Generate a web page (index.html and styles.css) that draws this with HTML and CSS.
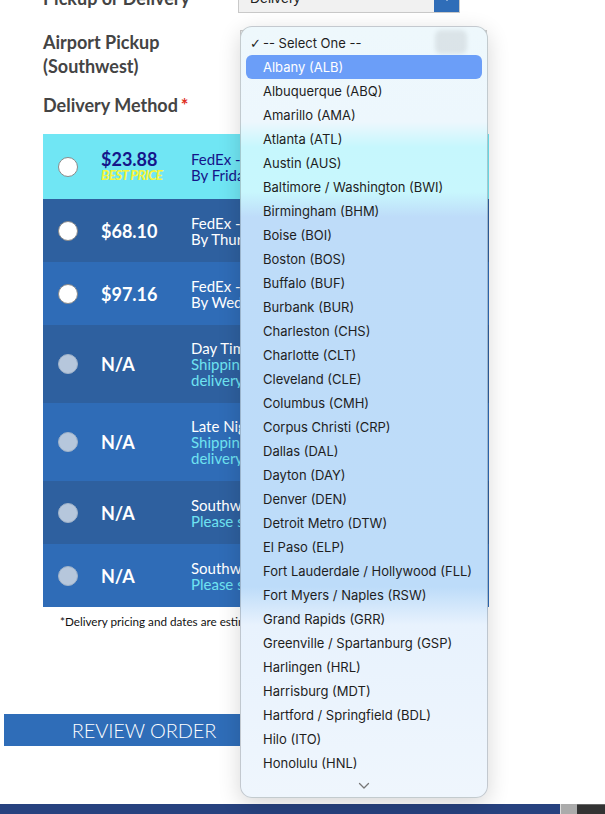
FILE: index.html
```html
<!DOCTYPE html>
<html>
<head>
<meta charset="utf-8">
<link rel="stylesheet" href="styles.css">
</head>
<body>
<div class="form">
  <div class="field field-first">
    <div class="label">Pickup or Delivery<span class="req">*</span></div>
    <div class="select">
      <span class="select-text">Delivery</span>
      <span class="select-btn"><svg width="12" height="10" viewBox="0 0 12 10"><path d="M1 2 L6 8 L11 2 Z" fill="#fff"/></svg></span>
    </div>
  </div>
  <div class="field field-airport">
    <div class="label">Airport Pickup<br>(Southwest)</div>
    <div class="select select-airport"></div>
  </div>
  <div class="field field-method">
    <div class="label">Delivery Method<span class="req">*</span></div>
  </div>

  <div class="table">
    <div class="trow best">
      <span class="radio"></span>
      <div class="price"><div class="amt">$23.88</div><div class="bp">BEST PRICE</div></div>
      <div class="carrier">FedEx - 2Day<br>By Friday, 5:00 PM</div>
    </div>
    <div class="trow dark">
      <span class="radio"></span>
      <div class="price"><div class="amt">$68.10</div></div>
      <div class="carrier">FedEx - Priority Overnight<br>By Thursday, 10:30 AM</div>
    </div>
    <div class="trow light">
      <span class="radio"></span>
      <div class="price"><div class="amt">$97.16</div></div>
      <div class="carrier">FedEx - First Overnight<br>By Wednesday, 8:00 AM</div>
    </div>
    <div class="trow dark tall">
      <span class="radio off"></span>
      <div class="price"><div class="amt">N/A</div></div>
      <div class="carrier">Day Time Delivery<br><span class="note">Shipping address required for<br>delivery estimate</span></div>
    </div>
    <div class="trow light tall">
      <span class="radio off"></span>
      <div class="price"><div class="amt">N/A</div></div>
      <div class="carrier">Late Night Delivery<br><span class="note">Shipping address required for<br>delivery estimate</span></div>
    </div>
    <div class="trow dark">
      <span class="radio off"></span>
      <div class="price"><div class="amt">N/A</div></div>
      <div class="carrier">Southwest Next Flight Guaranteed<br><span class="note">Please select an airport</span></div>
    </div>
    <div class="trow light">
      <span class="radio off"></span>
      <div class="price"><div class="amt">N/A</div></div>
      <div class="carrier">Southwest Rush Priority<br><span class="note">Please select an airport</span></div>
    </div>
  </div>
  <p class="footnote">*Delivery pricing and dates are estimates and may change at checkout.</p>
</div>

<div class="actions">
  <button class="review">REVIEW ORDER</button>
</div>

<div class="footer">
  <div class="f-main"></div>
  <div class="f-grey"></div>
  <div class="f-dark"></div>
</div>

<div class="dropdown">
  <div class="ghost"></div>
  <ul class="options">
    <li class="checked"><span class="check">✓</span>-- Select One --</li>
    <li class="hl">Albany (ALB)</li>
    <li>Albuquerque (ABQ)</li>
    <li>Amarillo (AMA)</li>
    <li>Atlanta (ATL)</li>
    <li>Austin (AUS)</li>
    <li>Baltimore / Washington (BWI)</li>
    <li>Birmingham (BHM)</li>
    <li>Boise (BOI)</li>
    <li>Boston (BOS)</li>
    <li>Buffalo (BUF)</li>
    <li>Burbank (BUR)</li>
    <li>Charleston (CHS)</li>
    <li>Charlotte (CLT)</li>
    <li>Cleveland (CLE)</li>
    <li>Columbus (CMH)</li>
    <li>Corpus Christi (CRP)</li>
    <li>Dallas (DAL)</li>
    <li>Dayton (DAY)</li>
    <li>Denver (DEN)</li>
    <li>Detroit Metro (DTW)</li>
    <li>El Paso (ELP)</li>
    <li>Fort Lauderdale / Hollywood (FLL)</li>
    <li>Fort Myers / Naples (RSW)</li>
    <li>Grand Rapids (GRR)</li>
    <li>Greenville / Spartanburg (GSP)</li>
    <li>Harlingen (HRL)</li>
    <li>Harrisburg (MDT)</li>
    <li>Hartford / Springfield (BDL)</li>
    <li>Hilo (ITO)</li>
    <li>Honolulu (HNL)</li>
  </ul>
  <div class="more"><svg width="12" height="8" viewBox="0 0 12 8"><path d="M1.5 1.5 L6 6 L10.5 1.5" fill="none" stroke="#777" stroke-width="1.3" stroke-linecap="round" stroke-linejoin="round"/></svg></div>
</div>
</body>
</html>
```

FILE: styles.css
```css
* { box-sizing: border-box; }
html, body { margin: 0; padding: 0; }
body {
  width: 605px;
  height: 814px;
  overflow: hidden;
  background: #fff;
  font-family: Lato, "Open Sans", sans-serif;
  position: relative;
}

.form {
  margin-top: -17px;
  padding-left: 43px;
}

.field {
  display: flex;
  align-items: flex-start;
}
.field-first { height: 30px; }
.field-airport { margin-top: 17px; }
.field-method { margin-top: 15px; }

.label {
  width: 195px;
  font-size: 18px;
  line-height: 24px;
  font-weight: 700;
  color: #444;
}
.field-first .label { margin-top: 3px; }
.req { color: #e0301e; margin-left: 3px; }

.select {
  width: 222px;
  height: 30px;
  background: #f1f1f1;
  border: 1px solid #c9c9c9;
  display: flex;
  align-items: center;
  justify-content: space-between;
  font-family: "Liberation Sans", Arial, sans-serif;
  font-size: 14px;
  color: #222;
}
.select-text { padding-left: 11px; }
.select-btn {
  width: 25px;
  height: 28px;
  background: #2f6db8;
  display: flex;
  align-items: center;
  justify-content: center;
}
.select-airport { width: 247px; margin-left: 2px; }

.table {
  margin-top: 17px;
  width: 446px;
}
.trow {
  display: flex;
  align-items: center;
  min-height: 63px;
  color: #fff;
}
.trow.best { min-height: 65px; background: #70e6f4; color: #15158a; }
.trow.dark { background: #2e609f; }
.trow.light { background: #2f6cb7; }
.trow.tall { min-height: 78px; }

.radio {
  width: 20px;
  height: 20px;
  border-radius: 50%;
  background: #fff;
  border: 1px solid #8a8a8a;
  margin-left: 15px;
  flex: none;
}
.radio.off { background: #b6c7dc; border-color: #9fb2c9; }

.price {
  width: 90px;
  margin-left: 23px;
  flex: none;
}
.amt {
  font-size: 18px;
  line-height: 18px;
  font-weight: 700;
}
.best .price { margin-top: -2px; }
.best .amt { color: #15158a; }
.bp {
  font-size: 13.5px;
  line-height: 14px;
  font-weight: 900;
  font-style: italic;
  color: #f3f53c;
  letter-spacing: -0.7px;
}
.carrier {
  font-size: 15px;
  line-height: 16px;
  white-space: nowrap;
  overflow: hidden;
}
.note { color: #6fe3f1; }

.footnote {
  margin: 7px 0 0;
  padding-left: 17px;
  font-size: 11.7px;
  line-height: 14px;
  color: #111;
}

.actions {
  margin-top: 86px;
  padding-left: 4px;
}
.review {
  width: 280px;
  height: 32px;
  border: 0;
  padding: 0;
  background: #2f6db8;
  color: #fff;
  font-family: Lato, sans-serif;
  font-weight: 300;
  font-size: 20px;
  letter-spacing: -0.1px;
}

.footer {
  margin-top: 58px;
  display: flex;
  height: 30px;
}
.f-main { width: 560px; background: #27427f; }
.f-grey { width: 17px; background: #ababab; border-left: 1px solid #ddd; }
.f-dark { flex: 1; background: #333; border-top: 1px solid #666; }

.dropdown {
  position: absolute;
  left: 240px;
  top: 26px;
  width: 248px;
  height: 772px;
  border-radius: 12px;
  border: 1px solid rgba(0, 0, 0, 0.18);
  box-shadow: 0 6px 22px rgba(0, 0, 0, 0.16);
  background: linear-gradient(to bottom,
    #eef8fc 0px, #edf7fd 95px, #c6f7fd 120px, #c8f7fd 165px,
    #bedcf9 190px, #bddcf9 560px, #e8f2fd 598px, #eff6fd 100%);
  overflow: hidden;
  font-family: Inter, "Noto Sans", "DejaVu Sans", sans-serif;
  font-size: 13px;
  color: #1e1e1e;
}
.ghost {
  position: absolute;
  right: 20px;
  top: 3px;
  width: 32px;
  height: 24px;
  border-radius: 6px;
  background: rgba(0, 0, 0, 0.08);
  filter: blur(2px);
}
.options {
  list-style: none;
  margin: 0;
  padding: 4px 5px 0;
  position: relative;
}
.options li {
  height: 24px;
  line-height: 24px;
  padding-left: 17px;
  border-radius: 6px;
  white-space: nowrap;
}
.options li.checked { padding-left: 4px; }
.check {
  display: inline-block;
  width: 13px;
  font-family: "DejaVu Sans", sans-serif;
  font-size: 13px;
  font-weight: 700;
}
.options li.hl {
  background: #6b9ef8;
  color: #fff;
}
.more {
  height: 22px;
  display: flex;
  align-items: center;
  justify-content: center;
}
```
